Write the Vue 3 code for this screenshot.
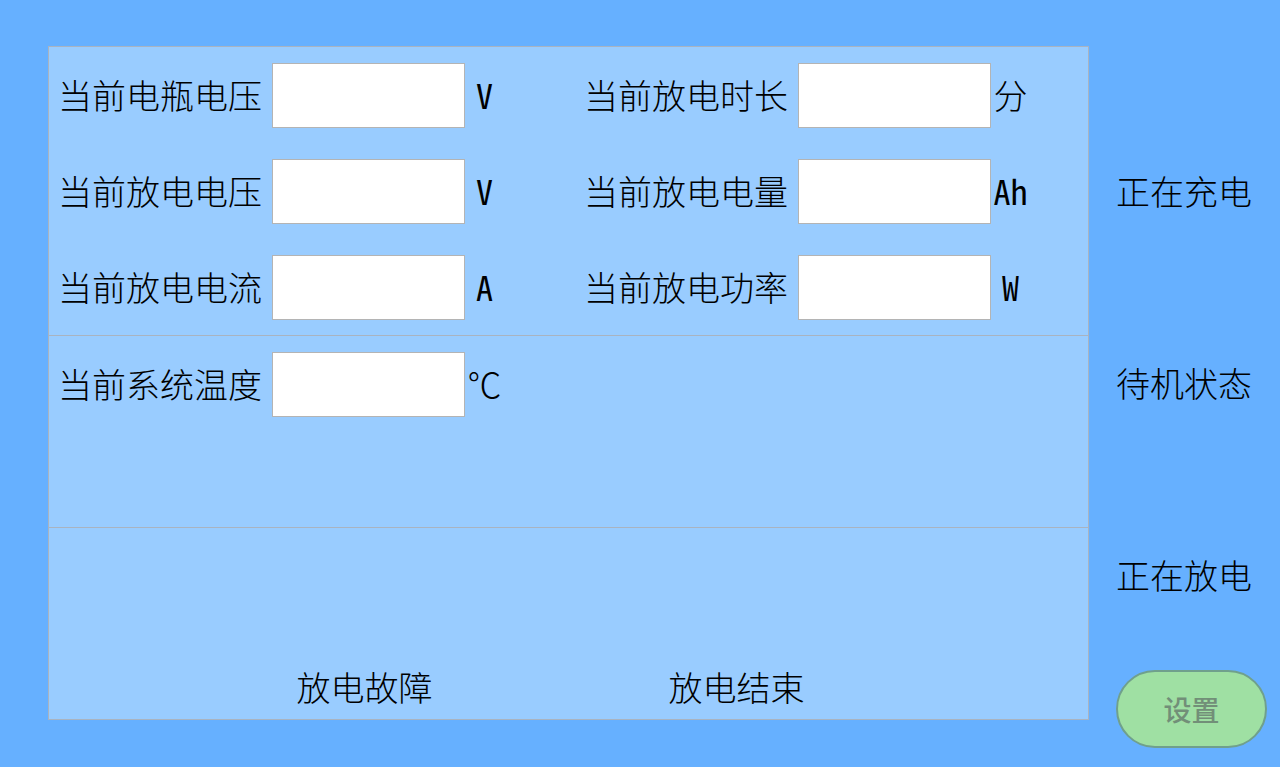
<script setup>
const readings = [
  { id: 'battery-voltage', label: '当前电瓶电压', unit: 'V' },
  { id: 'discharge-time', label: '当前放电时长', unit: '分' },
  { id: 'discharge-voltage', label: '当前放电电压', unit: 'V' },
  { id: 'discharge-capacity', label: '当前放电电量', unit: 'Ah' },
  { id: 'discharge-current', label: '当前放电电流', unit: 'A' },
  { id: 'discharge-power', label: '当前放电功率', unit: 'W' }
]
const system = [{ id: 'system-temp', label: '当前系统温度', unit: '℃' }]
const groups = [readings, system]
const results = ['放电故障', '放电结束']
const states = ['正在充电', '待机状态', '正在放电']
const isLatin = (text) => /^[A-Za-z]+$/.test(text)
</script>

<template>
  <main class="page">
    <div class="panel">
      <section v-for="(group, i) in groups" :key="i" class="section fields">
        <div v-for="f in group" :key="f.id" class="field">
          <label class="label" :for="f.id">{{ f.label }}</label>
          <input :id="f.id" class="value" type="text" />
          <span class="unit" :class="{ latin: isLatin(f.unit) }">{{ f.unit }}</span>
        </div>
      </section>
      <section class="section results">
        <span v-for="r in results" :key="r">{{ r }}</span>
      </section>
    </div>
    <aside class="side">
      <span v-for="s in states" :key="s" class="state">{{ s }}</span>
      <button class="settings" type="button">设置</button>
    </aside>
  </main>
</template>

<style>
body {
  margin: 0;
  background: #66b0ff;
}
</style>

<style scoped>
.page {
  display: flex;
  align-items: flex-start;
  box-sizing: border-box;
  min-height: 100vh;
  padding: 46px 13px 19px 48px;
  color: #000;
  font-family: "KaiTi", "Noto Sans CJK SC", sans-serif;
  font-size: 34px;
  font-weight: 300;
  line-height: 64px;
  white-space: nowrap;
}
.panel {
  flex: 1;
  border: 1px solid #a9b3c0;
  background: #99ccff;
}
.section {
  box-sizing: border-box;
  min-height: 192px;
}
.section + .section {
  border-top: 1px solid #a9b3c0;
}
.fields {
  display: grid;
  grid-template-columns: 21fr 20fr;
  grid-auto-rows: 96px;
  padding: 0 3px 0 9px;
}
.field {
  display: flex;
  align-items: center;
}
.label {
  width: 214px;
}
.value {
  box-sizing: border-box;
  width: 193px;
  height: 65px;
  padding: 0 8px;
  border: 1px solid #b4b4b4;
  border-radius: 0;
  background: #fff;
  font: inherit;
}
.unit {
  width: 39px;
  text-align: center;
}
.latin {
  font-family: "Noto Sans Mono CJK SC", "Noto Sans CJK SC", sans-serif;
  font-weight: 400;
}
.results {
  display: flex;
  align-items: flex-end;
  justify-content: center;
  gap: 236px;
  padding-right: 36px;
}
.side {
  display: flex;
  flex-direction: column;
  width: 151px;
  padding: 113px 0 0 27px;
}
.state {
  margin-bottom: 128px;
}
.state:last-of-type {
  margin-bottom: 63px;
}
.settings {
  height: 78px;
  padding: 0;
  border: 2px solid #70a08c;
  border-radius: 39px;
  background: #9fe0a3;
  color: #728f78;
  font: 500 28px "Noto Sans CJK SC", sans-serif;
}
</style>
